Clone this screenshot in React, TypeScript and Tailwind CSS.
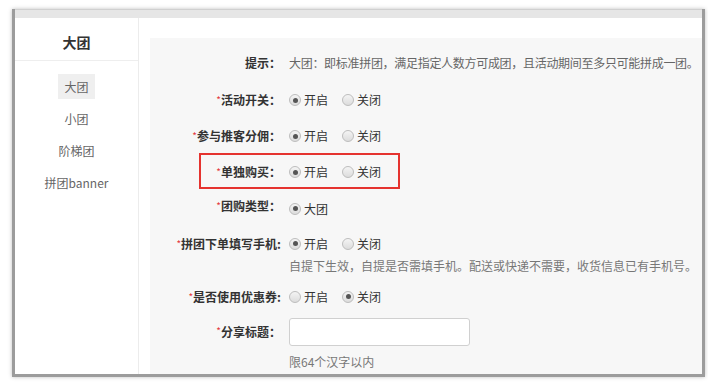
import type { ReactNode } from "react";

const FONT = {
  fontFamily: '"Microsoft YaHei", "Noto Sans CJK SC", "Noto Sans", sans-serif',
};

function Radio({ checked, label }: { checked?: boolean; label: string }) {
  return (
    <span className="inline-flex items-center gap-[3px]">
      <span className="w-[12px] h-[12px] rounded-full border border-[#bdbdbd] bg-gradient-to-b from-[#f4f4f4] to-[#dcdcdc] flex items-center justify-center">
        {checked && <span className="w-[5px] h-[5px] rounded-full bg-[#555]" />}
      </span>
      <span className="text-[#333]">{label}</span>
    </span>
  );
}

function Row({
  label,
  required = true,
  className = "",
  children,
}: {
  label: string;
  required?: boolean;
  className?: string;
  children: ReactNode;
}) {
  return (
    <div className={`flex items-start leading-[20px] ${className}`}>
      <div className="w-[131px] shrink-0 text-right font-bold text-[#333] whitespace-nowrap">
        {required && <span className="text-[#e4393c] text-[10px] font-normal align-top">*</span>}
        {label}
      </div>
      <div className="ml-[8px] flex-1">{children}</div>
    </div>
  );
}

const MENU = ["大团", "小团", "阶梯团", "拼团banner"];

export default function App() {
  return (
    <div className="w-[708px] h-[384px] bg-white pt-[9px] pl-[12px] text-[12px]" style={FONT}>
      <div className="w-[693px] h-[368px] border-x-[3px] border-b-[3px] border-[#9c9c9c] shadow-[0_0_4px_rgba(0,0,0,0.25)] flex flex-col overflow-hidden">
        <div className="h-[9px] bg-[#e6e6e6] border-t border-[#d0d0d0]" />
        <div className="flex flex-1 min-h-0">
          {/* Sidebar */}
          <div className="w-[124px] shrink-0 border-r border-[#ececec] bg-white">
            <div className="h-[43px] pt-[16px] border-b border-[#eeeeee] text-center text-[14px] leading-[16px] font-bold text-[#333]">
              大团
            </div>
            <div className="flex flex-col items-center gap-[7px] pt-[13px]">
              {MENU.map((m, i) => (
                <div
                  key={m}
                  className={`h-[25px] leading-[25px] px-[6px] text-[#666] ${i === 0 ? "bg-[#efefef]" : ""}`}
                >
                  {m}
                </div>
              ))}
            </div>
          </div>

          {/* Main */}
          <div className="flex-1 pl-[11px] pt-[20px] flex">
            <div className="flex-1 bg-[#f7f7f7] pt-[15px]">
              <Row label="提示：" required={false}>
                <span className="text-[#666] whitespace-nowrap tracking-[-0.3px]">
                  大团：即标准拼团，满足指定人数方可成团，且活动期间至多只可能拼成一团。
                </span>
              </Row>
              <Row label="活动开关：" className="mt-[17px]">
                <div className="flex gap-[14px]">
                  <Radio checked label="开启" />
                  <Radio label="关闭" />
                </div>
              </Row>
              <Row label="参与推客分佣：" className="mt-[16px]">
                <div className="flex gap-[14px]">
                  <Radio checked label="开启" />
                  <Radio label="关闭" />
                </div>
              </Row>
              <div className="relative mt-[16px]">
                <Row label="单独购买：">
                  <div className="flex gap-[14px]">
                    <Radio checked label="开启" />
                    <Radio label="关闭" />
                  </div>
                </Row>
                <div className="absolute left-[49px] top-[-9px] w-[201px] h-[36px] border-2 border-[#e5332f]" />
              </div>
              <Row label="团购类型：" className="mt-[14px]">
                <Radio checked label="大团" />
              </Row>
              <Row label="拼团下单填写手机:" className="mt-[15px]">
                <div className="flex gap-[14px]">
                  <Radio checked label="开启" />
                  <Radio label="关闭" />
                </div>
                <div className="mt-[2px] text-[#777] whitespace-nowrap">
                  自提下生效，自提是否需填手机。配送或快递不需要，收货信息已有手机号。
                </div>
              </Row>
              <Row label="是否使用优惠券:" className="mt-[11px]">
                <div className="flex gap-[14px]">
                  <Radio label="开启" />
                  <Radio checked label="关闭" />
                </div>
              </Row>
              <div className="flex items-center mt-[11px]">
                <div className="w-[131px] shrink-0 text-right font-bold text-[#333]">
                  <span className="text-[#e4393c] text-[10px] font-normal align-top">*</span>
                  分享标题：
                </div>
                <input
                  type="text"
                  className="ml-[8px] w-[181px] h-[28px] rounded-[3px] border border-[#d0d0d0] bg-white outline-none"
                />
              </div>
              <div className="ml-[139px] mt-[6px] leading-[20px] text-[#777]">限64个汉字以内</div>
            </div>
          </div>
        </div>
      </div>
    </div>
  );
}
